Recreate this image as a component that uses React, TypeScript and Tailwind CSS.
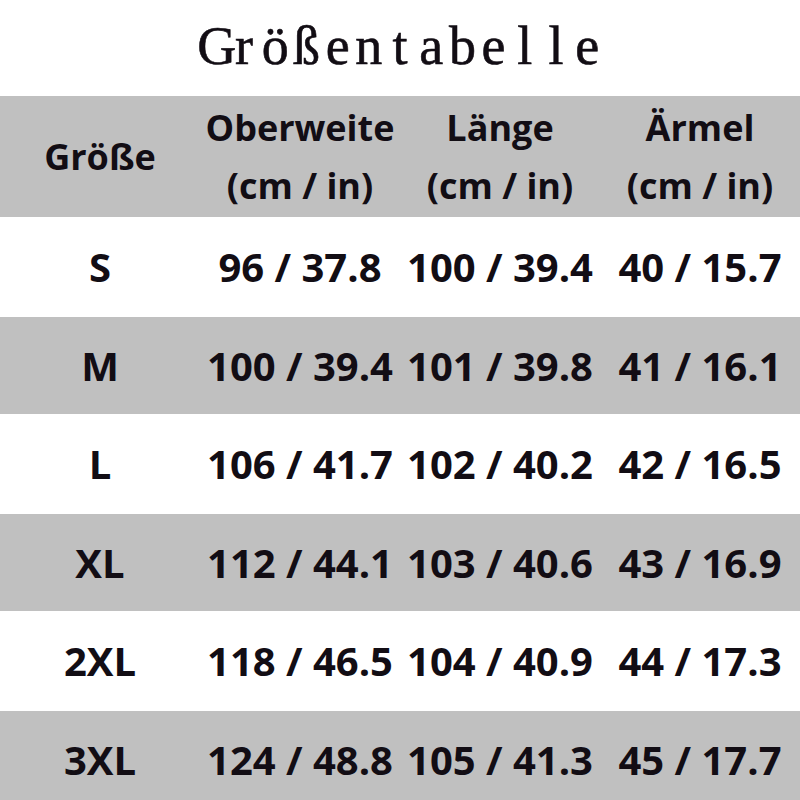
const title = "Größentabelle";

const headers = [
  { name: "Oberweite", unit: "(cm / in)" },
  { name: "Länge", unit: "(cm / in)" },
  { name: "Ärmel", unit: "(cm / in)" },
];

const rows = [
  { size: "S", chest: "96 / 37.8", length: "100 / 39.4", sleeve: "40 / 15.7" },
  { size: "M", chest: "100 / 39.4", length: "101 / 39.8", sleeve: "41 / 16.1" },
  { size: "L", chest: "106 / 41.7", length: "102 / 40.2", sleeve: "42 / 16.5" },
  { size: "XL", chest: "112 / 44.1", length: "103 / 40.6", sleeve: "43 / 16.9" },
  { size: "2XL", chest: "118 / 46.5", length: "104 / 40.9", sleeve: "44 / 17.3" },
  { size: "3XL", chest: "124 / 48.8", length: "105 / 41.3", sleeve: "45 / 17.7" },
];

export default function App() {
  return (
    <div className="h-[800px] w-[800px] overflow-hidden bg-white text-[#120d14]">
      <div className="flex h-[96px] items-center justify-center pb-1 font-['Liberation_Serif',serif] text-[54px] [-webkit-text-stroke:0.6px_#120d14]">
        {title.split("").map((ch, i) => (
          <span key={i} className="inline-block w-[31.2px] text-center">
            {ch}
          </span>
        ))}
      </div>

      <div className="font-['Open_Sans',sans-serif] font-bold">
        <div className="grid h-[121px] grid-cols-4 items-center bg-[#c0c0c0] text-center text-[36px] leading-[58px]">
          <div>Größe</div>
          {headers.map((h) => (
            <div key={h.name}>
              <div>{h.name}</div>
              <div>{h.unit}</div>
            </div>
          ))}
        </div>

        {rows.map((row, i) => (
          <div
            key={row.size}
            className={
              i % 2 === 0
                ? "grid h-[100px] grid-cols-4 items-center bg-white text-center text-[40px]"
                : "grid h-[97px] grid-cols-4 items-center bg-[#c0c0c0] text-center text-[40px]"
            }
          >
            <div>{row.size}</div>
            <div>{row.chest}</div>
            <div>{row.length}</div>
            <div>{row.sleeve}</div>
          </div>
        ))}
      </div>
    </div>
  );
}
